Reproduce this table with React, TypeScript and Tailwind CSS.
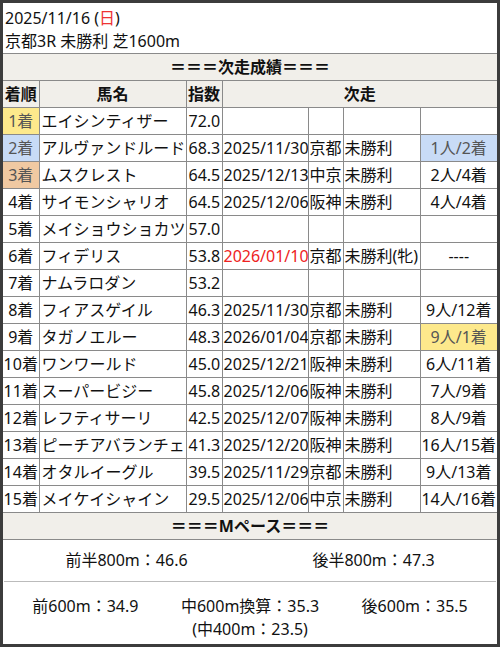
import React from 'react';

type Row = {
  rank: string;
  name: string;
  score: string;
  date?: string;
  dateRed?: boolean;
  place?: string;
  cls?: string;
  result?: string;
  rankBg?: string;
  resultBg?: string;
};

const rows: Row[] = [
  { rank: '1着', name: 'エイシンティザー', score: '72.0', rankBg: 'bg-[#fde98c] text-[#555]' },
  { rank: '2着', name: 'アルヴァンドルード', score: '68.3', date: '2025/11/30', place: '京都', cls: '未勝利', result: '1人/2着', rankBg: 'bg-[#c8dbf6] text-[#555]', resultBg: 'bg-[#c8dbf6] text-[#555]' },
  { rank: '3着', name: 'ムスクレスト', score: '64.5', date: '2025/12/13', place: '中京', cls: '未勝利', result: '2人/4着', rankBg: 'bg-[#f0c9a2] text-[#555]' },
  { rank: '4着', name: 'サイモンシャリオ', score: '64.5', date: '2025/12/06', place: '阪神', cls: '未勝利', result: '4人/4着' },
  { rank: '5着', name: 'メイショウショカツ', score: '57.0' },
  { rank: '6着', name: 'フィデリス', score: '53.8', date: '2026/01/10', dateRed: true, place: '京都', cls: '未勝利(牝)', result: '----' },
  { rank: '7着', name: 'ナムラロダン', score: '53.2' },
  { rank: '8着', name: 'フィアスゲイル', score: '46.3', date: '2025/11/30', place: '京都', cls: '未勝利', result: '9人/12着' },
  { rank: '9着', name: 'タガノエルー', score: '48.3', date: '2026/01/04', place: '京都', cls: '未勝利', result: '9人/1着', resultBg: 'bg-[#fde98c] text-[#555]' },
  { rank: '10着', name: 'ワンワールド', score: '45.0', date: '2025/12/21', place: '阪神', cls: '未勝利', result: '6人/11着' },
  { rank: '11着', name: 'スーパービジー', score: '45.8', date: '2025/12/06', place: '阪神', cls: '未勝利', result: '7人/9着' },
  { rank: '12着', name: 'レフティサーリ', score: '42.5', date: '2025/12/07', place: '阪神', cls: '未勝利', result: '8人/9着' },
  { rank: '13着', name: 'ピーチアバランチェ', score: '41.3', date: '2025/12/20', place: '阪神', cls: '未勝利', result: '16人/15着' },
  { rank: '14着', name: 'オタルイーグル', score: '39.5', date: '2025/11/29', place: '京都', cls: '未勝利', result: '9人/13着' },
  { rank: '15着', name: 'メイケイシャイン', score: '29.5', date: '2025/12/06', place: '中京', cls: '未勝利', result: '14人/16着' },
];

const cell = 'border border-[#8a8a8a] h-[27px] p-0 whitespace-nowrap overflow-hidden';

const App: React.FC = () => {
  return (
    <div
      className="w-[500px] h-[647px] border-[3px] border-[#3c3c3c] bg-white text-[#111] text-[16px] leading-[23px] overflow-hidden"
      style={{ fontFamily: '"Noto Sans", "Noto Sans CJK JP", sans-serif' }}
    >
      {/* race info */}
      <div className="px-[2px] pt-[4px] h-[50px]">
        <div>
          2025/11/16 (<span className="text-[#ee3333]">日</span>)
        </div>
        <div>京都3R 未勝利 芝1600m</div>
      </div>

      <table className="w-full table-fixed border-collapse">
        <colgroup>
          <col className="w-[36px]" />
          <col className="w-[147px]" />
          <col className="w-[36px]" />
          <col className="w-[86px]" />
          <col className="w-[35px]" />
          <col className="w-[77px]" />
          <col className="w-[77px]" />
        </colgroup>
        <thead>
          <tr>
            <th colSpan={7} className={`${cell} border-x-0 bg-[#f1efea] font-bold text-center`}>
              ＝＝＝次走成績＝＝＝
            </th>
          </tr>
          <tr className="bg-[#f1efea] font-bold">
            <th className={`${cell} border-l-0 text-center`}>着順</th>
            <th className={`${cell} text-center`}>馬名</th>
            <th className={`${cell} text-center`}>指数</th>
            <th colSpan={4} className={`${cell} border-r-0 text-center`}>次走</th>
          </tr>
        </thead>
        <tbody>
          {rows.map((r) => (
            <tr key={r.rank}>
              <td className={`${cell} border-l-0 text-center ${r.rankBg ?? ''}`}>{r.rank}</td>
              <td className={`${cell} pl-[2px]`}>{r.name}</td>
              <td className={`${cell} pl-[2px]`}>{r.score}</td>
              <td className={`${cell} pl-[1px] ${r.dateRed ? 'text-[#ee2222]' : ''}`}>{r.date ?? ''}</td>
              <td className={`${cell} pl-[1px]`}>{r.place ?? ''}</td>
              <td className={`${cell} pl-[1px]`}>{r.cls ?? ''}</td>
              <td className={`${cell} border-r-0 text-center ${r.resultBg ?? ''}`}>{r.result ?? ''}</td>
            </tr>
          ))}
          <tr>
            <th colSpan={7} className={`${cell} border-x-0 bg-[#f1efea] font-bold text-center`}>
              ＝＝＝Mペース＝＝＝
            </th>
          </tr>
        </tbody>
      </table>

      {/* pace */}
      <div className="flex h-[41px] items-center">
        <div className="flex-1 text-center">前半800m：46.6</div>
        <div className="flex-1 text-center">後半800m：47.3</div>
      </div>
      <div className="mx-[1px] border-t border-[#bbbbbb]" />
      <div className="flex pt-[13px]">
        <div className="flex-1 text-center">前600m：34.9</div>
        <div className="flex-1 text-center">
          中600m換算：35.3
          <br />
          (中400m：23.5)
        </div>
        <div className="flex-1 text-center">後600m：35.5</div>
      </div>
    </div>
  );
};

export default App;
